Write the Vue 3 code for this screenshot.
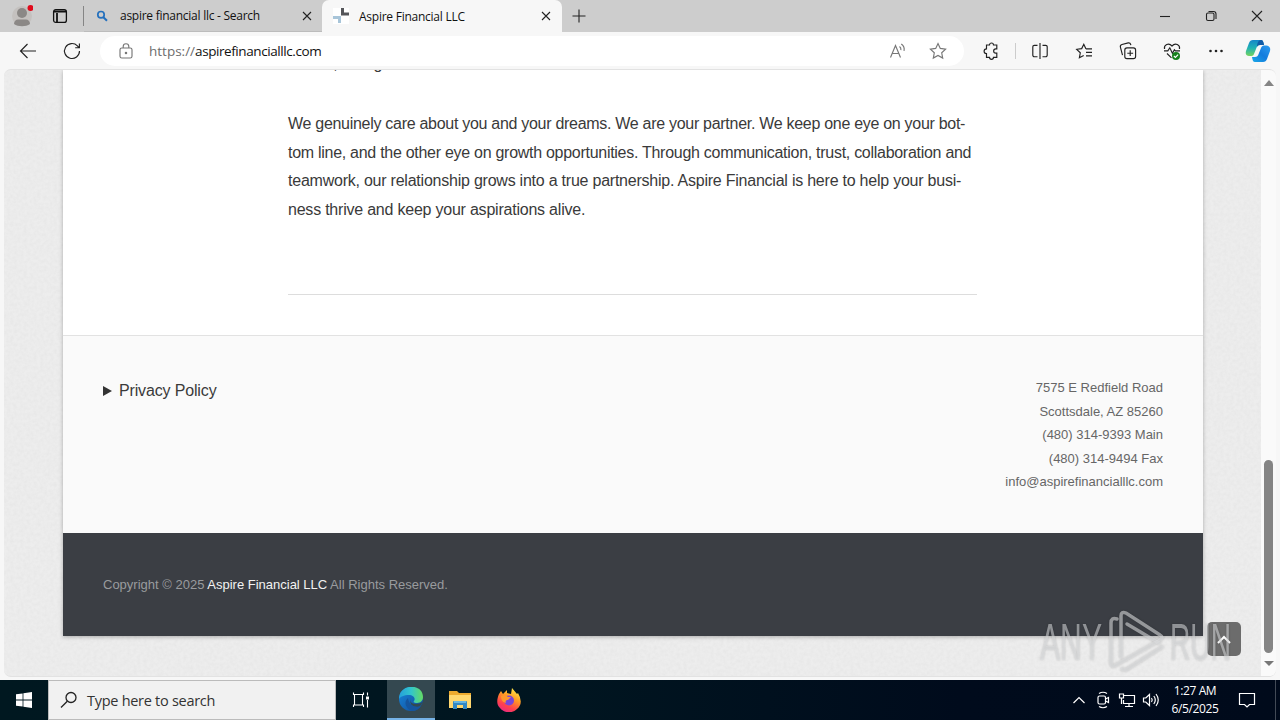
<template>
	<div class="desktop">
		<header class="tabs">
			<div class="tool profile">
				<svg width="22" height="24" viewBox="0 0 22 24">
					<circle cx="11" cy="12" r="10" fill="#c4c1bf" />
					<circle cx="11" cy="9" r="5" fill="#8b8886" />
					<path d="M3 20c0-3 2-4.500 4-4.500h8c2 0 4 1.500 4 4.500-4 3-12 3-16 0z" fill="#8b8886" />
					<circle cx="19.500" cy="4" r="3" fill="#e00b1c" />
				</svg>
			</div>
			<div class="tool workspace">
				<svg width="16" height="16" viewBox="0 0 16 16" fill="none" stroke="#111" stroke-width="1.300">
					<rect x="1.600" y="1.600" width="12.800" height="12.800" rx="2.200" />
					<path d="M2 3.500h12M5 5v9" stroke-width="1.800" />
				</svg>
			</div>
			<i class="tab-line"></i>
			<div class="tab">
				<svg class="favicon" width="14" height="14" viewBox="0 0 14 14" fill="none" stroke="#2470bd">
					<circle cx="6" cy="5.700" r="3.200" stroke-width="1.700" />
					<path d="M8.400 8.200l3.600 3.600" stroke-width="2" />
				</svg>
				<span class="title search-title">aspire financial llc - Search</span>
				<svg class="x" width="10" height="10" viewBox="0 0 10 10"><path d="M1 1l8 8M9 1l-8 8" /></svg>
			</div>
			<div class="tab active">
				<svg class="favicon" width="16" height="16" viewBox="0 0 16 16">
					<path d="M0 0h16v16H0z" fill="#fff" />
					<path d="M8 0h3v4.500h5v3H8z" fill="#55565a" />
					<path d="M0 8h8v7H5v-4H0z" fill="#a8c5d9" />
				</svg>
				<span class="title site-title">Aspire Financial LLC</span>
				<svg class="x" width="10" height="10" viewBox="0 0 10 10"><path d="M1 1l8 8M9 1l-8 8" /></svg>
			</div>
			<svg class="plus" width="14" height="14" viewBox="0 0 14 14"><path d="M7 .5v13M.5 7h13" /></svg>
			<div class="window-buttons">
				<svg width="12" height="12" viewBox="0 0 12 12"><path d="M1 6.500h10" /></svg>
				<svg width="12" height="12" viewBox="0 0 12 12">
					<rect x="1.500" y="3" width="7.500" height="7.500" rx="1.500" />
					<path d="M3.500 1.500h5a2.500 2.500 0 0 1 2.500 2.500v5" />
				</svg>
				<svg width="12" height="12" viewBox="0 0 12 12"><path d="M1 1l10 10M11 1L1 11" /></svg>
			</div>
		</header>

		<nav class="toolbar">
			<div class="nav-button">
				<svg width="18" height="16" viewBox="0 0 18 16"><path d="M17 8H1.500M8.500 1L1.500 8l7 7" /></svg>
			</div>
			<div class="nav-button">
				<svg width="18" height="18" viewBox="0 0 18 18">
					<path d="M16.500 9A7.500 7.500 0 1 1 14.400 3.800L16 5.500M16.400 1.500v4.200h-4.200" />
				</svg>
			</div>
			<div class="address">
				<svg class="lock" width="14" height="16" viewBox="0 0 14 16">
					<rect x="1" y="5" width="12" height="10" rx="1.800" />
					<path d="M4.200 5V3.500a2.800 2.800 0 0 1 5.600 0V5" />
					<circle cx="7" cy="10" r=".7" />
				</svg>
				<span class="url"><span>https://</span>aspirefinancialllc.com</span>
				<svg class="read" width="18" height="16" viewBox="0 0 18 16">
					<path d="M1.500 14.500L6.500 2.500l5 12M3.200 10.500h6.600M10.500 3.500c1.300 1 1.600 2.200 1.400 3.700M12.300 1c2.600 1.900 3.300 4.300 2.700 6.800" />
				</svg>
				<svg width="18" height="18" viewBox="0 0 18 18">
					<path d="M9 1.500l2.300 4.900 5.300.7-3.900 3.700 1 5.300L9 13.500l-4.700 2.600 1-5.300L1.400 7.100l5.300-.7z" />
				</svg>
			</div>
			<div class="actions">
				<div class="action puzzle">
					<svg width="18" height="18" viewBox="0 0 18 18">
						<path d="M4.500 3h3a2 2 0 0 1 4 0h3.300v3.800h-1a2.100 2.100 0 0 0 0 4.300h1v4.200h-3.300a2 2 0 0 1-4 0h-3v-3.700a2.400 2.400 0 0 1 0-4.800z" />
					</svg>
				</div>
				<i class="divider"></i>
				<div class="action">
					<svg width="18" height="18" viewBox="0 0 18 18">
						<path d="M9 1v16M6.500 3.300H3.300a1.500 1.500 0 0 0-1.500 1.500v8.400a1.500 1.500 0 0 0 1.500 1.500h3.200M11.500 3.300h3.200a1.500 1.500 0 0 1 1.500 1.500v8.400a1.500 1.500 0 0 1-1.500 1.500h-3.200" />
					</svg>
				</div>
				<div class="action">
					<svg width="18" height="18" viewBox="0 0 18 18">
						<path d="M11 7L8.800 2.300 6.700 6.600l-5 .7 3.600 3.500-.9 4.900 4.300-2.300M11 6.800h6M11 10.300h6M11 13.800h6" />
					</svg>
				</div>
				<div class="action">
					<svg width="18" height="18" viewBox="0 0 18 18">
						<rect x="5.800" y="5.800" width="10.800" height="10.800" rx="2.200" />
						<path d="M11.200 8.300v5.800M8.300 11.200h5.800M3.500 13.200L1.400 5.200C1 3.700 1.700 2.900 3 2.500l6.200-1.600c1.400-.3 2.300.4 2.700 2.300" />
					</svg>
				</div>
				<div class="action">
					<svg width="18" height="18" viewBox="0 0 18 18">
						<path d="M1.500 7C.7 3 5.600.2 9 4c3.400-3.800 8.300-1 7.500 3M1 8.800h3.800l2-3 2.600 5.500 2-3.500 1 1H17M4 11.500l4.500 4.300" />
						<circle cx="13" cy="14" r="4" fill="#16801b" stroke="none" />
						<path d="M10.900 14l1.500 1.400 2.700-2.800" stroke="#fff" />
					</svg>
				</div>
				<div class="action">
					<svg width="18" height="18" viewBox="0 0 18 18">
						<g fill="#222" stroke="none"><circle cx="3.500" cy="9" r="1.300" /><circle cx="9" cy="9" r="1.300" /><circle cx="14.500" cy="9" r="1.300" /></g>
					</svg>
				</div>
				<svg class="copilot" width="26" height="24" viewBox="0 0 26 24">
					<defs>
						<linearGradient id="copilotLeft" x1="0" y1="0" x2="0" y2="1"><stop offset="0" stop-color="#1686c9" /><stop offset=".5" stop-color="#20b2b4" /><stop offset="1" stop-color="#75d45e" /></linearGradient>
						<linearGradient id="copilotRight" x1="0" y1="1" x2="1" y2="0"><stop offset="0" stop-color="#1aa9e8" /><stop offset=".5" stop-color="#147cdd" /><stop offset="1" stop-color="#2d9df0" /></linearGradient>
					</defs>
					<path d="M8 1h8c2 0 2.500 2 3 5h-4c-2 0-3 1-3.600 3L9 15c-.7 2-2 2-4 2-3 0-5-1-4-5L4 4c.7-2 2-3 4-3z" fill="url(#copilotLeft)" />
					<path d="M16 1c2 0 2.500 2 3 5h-4c-1.700 0-2.500.7-3 2 0-3 1-7 4-7z" fill="#115ba7" />
					<path d="M18 23h-8c-2 0-2.500-2-3-5h3c2 0 3-1 3.600-3L16 9c.7-2 2-2.500 4-2.500 4 0 6 2 5 5.500l-3 8c-.7 2-2 3-4 3z" fill="url(#copilotRight)" />
				</svg>
			</div>
		</nav>

		<main class="viewport">
			<svg class="paper" width="1257" height="608">
				<filter id="grain"><feTurbulence type="fractalNoise" baseFrequency=".3" numOctaves="3" seed="4" /><feColorMatrix values="0 0 0 0 .5  0 0 0 0 .5  0 0 0 0 .5  .2 0 0 0 -.06" /></filter>
				<rect width="1257" height="608" filter="url(#grain)" />
			</svg>
			<div class="page">
				<article>
					<p class="previous">clients, and guide</p>
					<p>
						<span v-for="line in paragraph" :key="line.text" :style="{ letterSpacing: line.spacing + 'px' }">{{ line.text }}</span>
					</p>
					<hr />
				</article>
				<section class="contact">
					<div class="privacy"><i></i>Privacy Policy</div>
					<address>
						<span v-for="line in address" :key="line">{{ line }}</span>
					</address>
				</section>
				<footer>Copyright © 2025 <b>Aspire Financial LLC</b> All Rights Reserved.</footer>
			</div>
			<div class="scrollbar">
				<i class="up"></i>
				<i class="thumb"></i>
				<i class="down"></i>
			</div>
			<button class="to-top">
				<svg width="14" height="9" viewBox="0 0 14 9"><path d="M1 8l6-6 6 6" fill="none" stroke="#fff" stroke-width="2" /></svg>
			</button>
			<svg class="watermark" width="200" height="70" viewBox="0 0 200 70">
				<g class="letters">
					<text x="4" y="54" textLength="62" lengthAdjust="spacingAndGlyphs">ANY</text>
					<text x="134" y="54" textLength="61" lengthAdjust="spacingAndGlyphs">RUN</text>
				</g>
				<g class="play">
					<path d="M81 13q-6-2-6 4v40q0 5 5 2l44-25q4-3 0-5L90 7q-5-2-5 3v41" />
					<path d="M91 18l32 19M86 63q3 2 7-1l33-21" />
				</g>
			</svg>
		</main>

		<div class="taskbar">
			<div class="start">
				<svg width="16" height="16" viewBox="0 0 16 16" fill="#fff"><path d="M0 2.300l6.600-.9v6.200H0zM7.400 1.300L16 0v7.600H7.400zM0 8.400h6.600v6.200L0 13.700zM7.400 8.400H16V16l-8.600-1.300z" /></svg>
			</div>
			<div class="search">
				<svg width="18" height="18" viewBox="0 0 18 18" fill="none" stroke="#222" stroke-width="1.300"><circle cx="11" cy="6.500" r="5" /><path d="M7.300 10.200L1 16.500" /></svg>
				<span>Type here to search</span>
			</div>
			<div class="task">
				<svg width="18" height="18" viewBox="0 0 18 18" fill="none" stroke="#fff" stroke-width="1.100">
					<path d="M1.500 1.500v2h10v-2M1.500 16v-2h10v2M2.500 3.500v10.500M10.500 3.500v10.500M15.500 1.500v3M15.500 9v7.500" /><path d="M14 5.500h3v3h-3z" fill="#fff" stroke="none" />
				</svg>
			</div>
			<div class="task running">
				<svg width="24" height="24" viewBox="0 0 24 24">
					<defs>
						<linearGradient id="edgeTop"><stop offset="0" stop-color="#249fdb" /><stop offset=".5" stop-color="#32c5cc" /><stop offset="1" stop-color="#65db62" /></linearGradient>
						<linearGradient id="edgeBody" x1="0" y1="0" x2="1" y2="1"><stop offset="0" stop-color="#1787dd" /><stop offset="1" stop-color="#114a96" /></linearGradient>
					</defs>
					<circle cx="12" cy="12" r="12" fill="url(#edgeBody)" />
					<path d="M0 12C0-4 24-4 24 10c0 5-4 6-7 6-2 0-3-1-2-2 2-3-1-6-5-6-5 0-9 2-10 4z" fill="url(#edgeTop)" />
					<path d="M12 10c-2 4 0 7 5 7 3 0 5-1 6.500-2-1 3-3 5-6 5-5 0-8-5-5.500-10z" fill="#334950" />
					<path d="M9 11c-5 4-2 11 4 13 4 0 7-2 9-5-5 2-12 0-13-8z" fill="#15559e" />
				</svg>
			</div>
			<div class="task">
				<svg width="22" height="20" viewBox="0 0 22 20">
					<path d="M0 1h8l2 2h12v15H0z" fill="#edaa2f" /><path d="M0 5h22v13H0z" fill="#ffd76f" />
					<path d="M4 19v-7q0-1 1-1h12q1 0 1 1v7h-4v-4H8v4z" fill="#3288c5" /><path d="M5 11h12v2H5z" fill="#66b5e2" />
				</svg>
			</div>
			<div class="task">
				<svg width="24" height="24" viewBox="0 0 24 24">
					<defs><linearGradient id="fire" x1=".8" y1="0" x2=".3" y2="1"><stop offset="0" stop-color="#fff34d" /><stop offset=".4" stop-color="#ff9b23" /><stop offset=".75" stop-color="#ff404d" /><stop offset="1" stop-color="#e92a82" /></linearGradient></defs>
					<path d="M2 6l2-3 2 3 4-4v3l4 1 1-6 5 6 1-1q6 10-1 16c-5 5-13 4-17-1-4-4-3-9-1-14z" fill="url(#fire)" />
					<circle cx="12" cy="12.500" r="5" fill="#7846d8" /><path d="M4 8c3-2 5-1 7 1h3l-3 3c-2 0-3 1-2 3-4-1-5-4-5-7z" fill="#ff982b" />
				</svg>
			</div>
			<div class="tray">
				<svg width="24" height="20" viewBox="0 0 24 20"><path d="M6.500 13l5.500-5.500L17.500 13" /></svg>
				<svg width="24" height="20" viewBox="0 0 24 20"><rect x="7" y="6" width="7.500" height="8" rx="1.500" /><path d="M14.500 9l3-1.500v5l-3-1.500M8 3.500q4-2.500 8 0M8 16.500q4 2.500 8 0" /></svg>
				<svg width="24" height="20" viewBox="0 0 24 20"><path d="M9 5.500h10.500v8H8.500V10M14 13.500v3M10 16.500h8M4.500 4h4v4h-4zM6.500 8v6" /></svg>
				<svg width="24" height="20" viewBox="0 0 24 20"><path d="M4.500 8h2.300L10.500 4.500v11L6.800 12H4.500zM12.500 8q1.500 2 0 4M14.800 6q3 4 0 8M17 4q4.500 6 0 12" /></svg>
				<div class="clock"><span>1:27 AM</span><span>6/5/2025</span></div>
				<svg class="notice" width="20" height="20" viewBox="0 0 20 20"><path d="M2.500 3.500h15v11h-5L10 17l-2.500-2.500h-5z" /></svg>
			</div>
		</div>
	</div>
</template>

<script setup>
const paragraph = [
	{ text: 'We genuinely care about you and your dreams. We are your partner. We keep one eye on your bot-', spacing: -0.29 },
	{ text: 'tom line, and the other eye on growth opportunities. Through communication, trust, collaboration and', spacing: -0.28 },
	{ text: 'teamwork, our relationship grows into a true partnership. Aspire Financial is here to help your busi-', spacing: -0.23 },
	{ text: 'ness thrive and keep your aspirations alive.', spacing: -0.22 }
]

const address = [
	'7575 E Redfield Road',
	'Scottsdale, AZ 85260',
	'(480) 314-9393 Main',
	'(480) 314-9494 Fax',
	'info@aspirefinancialllc.com'
]
</script>

<style>
body {
	margin: 0;
	overflow: hidden;
}
</style>

<style scoped>
* {
	box-sizing: border-box;
}

.desktop {
	width: 1280px;
	height: 720px;
	display: flex;
	flex-direction: column;
	background: #f7f7f7;
	color: #111;
	font-family: "Open Sans", "Noto Sans", sans-serif;
	overflow: hidden;
}

svg {
	flex-shrink: 0;
	display: block;
}

/* tab strip */
.tabs {
	height: 32px;
	background: #cdcdcd;
	display: flex;
	align-items: center;
	flex-shrink: 0;
}

.tool {
	display: flex;
	justify-content: center;
}

.profile {
	width: 44px;
}

.workspace {
	width: 32px;
}

.tab-line {
	width: 1px;
	height: 20px;
	margin-left: 7px;
	background: #858585;
}

.tab {
	width: 238px;
	height: 32px;
	display: flex;
	align-items: center;
	padding: 0 10px 0 11px;
	border-bottom: 1px solid #bcbcbc;
}

.tab.active {
	width: 240px;
	padding: 0 11px;
	background: #f7f7f7;
	border: 0;
	border-radius: 7px 7px 0 0;
}

.title {
	font-size: 12px;
	margin-left: 11px;
	white-space: nowrap;
	flex: 1;
}

.active .title {
	margin-left: 10px;
}

.search-title {
	letter-spacing: -.26px;
}

.site-title {
	letter-spacing: -.25px;
}

.x,
.plus,
.window-buttons svg {
	fill: none;
	stroke: #222;
	stroke-width: 1.1;
}

.plus {
	margin-left: 10px;
}

.window-buttons {
	margin-left: auto;
	display: flex;
	gap: 34px;
	padding-right: 17px;
}

/* navigation */
.toolbar {
	height: 37px;
	padding-left: 6px;
	display: flex;
	align-items: center;
	flex-shrink: 0;
}

.nav-button {
	width: 44px;
	display: flex;
	justify-content: center;
}

.toolbar svg:not(.copilot) {
	fill: none;
	stroke: #222;
	stroke-width: 1.15;
}

.address {
	width: 864px;
	height: 30px;
	margin-left: 6px;
	padding: 0 17px 0 19px;
	border-radius: 15px;
	background: #fff;
	display: flex;
	align-items: center;
}

.toolbar .address svg:not(.copilot) {
	stroke: #777;
}

.url {
	flex: 1;
	margin-left: 16px;
	font-size: 13.5px;
	letter-spacing: -.42px;
}

.url span {
	color: #6d6d6d;
	letter-spacing: 0;
}

.read {
	margin-right: 22px;
}

.actions {
	display: flex;
	align-items: center;
}

.action {
	width: 44px;
	display: flex;
	justify-content: center;
}

.puzzle {
	width: 54px;
	margin-right: -3px;
}

.divider {
	width: 1px;
	height: 16px;
	background: #ccc;
	margin-right: 2px;
}

.copilot {
	margin-left: 7px;
}

/* web page */
.viewport {
	position: relative;
	height: 608px;
	margin: 0 4px 3px;
	border-radius: 7px;
	background: #ededed;
	border: 1px solid #e2e2e2;
	border-width: 1px 0;
	overflow: hidden;
	display: flex;
	justify-content: space-between;
	flex-shrink: 0;
	font-family: "Liberation Sans", Arial, sans-serif;
}

.paper {
	position: absolute;
	left: 0;
	top: 0;
}

.page {
	position: relative;
	width: 1140px;
	height: 566px;
	margin-left: 59px;
	background: #fff;
	box-shadow: 0 1px 4px rgba(0, 0, 0, .28);
}

article {
	display: flow-root;
	height: 265px;
	padding: 0 226px 0 225px;
	color: #3a3a3a;
	font-size: 16px;
	line-height: 28.6px;
	white-space: nowrap;
}

article p {
	margin: 0;
}

article p span {
	display: block;
}

/* only the descenders of this line are scrolled into view */
article .previous {
	margin: -20px 0 31.4px;
}

article hr {
	margin: 69.6px 0 0;
	border: 0;
	border-top: 1px solid #ddd;
}

.contact {
	height: 198px;
	padding: 40px;
	background: #fafafa;
	border-top: 1px solid #e2e2e2;
	display: flex;
	justify-content: space-between;
	color: #3a3a3a;
}

.privacy {
	height: 29px;
	display: flex;
	align-items: center;
	font-size: 16px;
	letter-spacing: -.15px;
}

.privacy i {
	border-left: 9px solid #333;
	border-top: 5px solid transparent;
	border-bottom: 5px solid transparent;
	margin-right: 7px;
}

address {
	font-style: normal;
	font-size: 13px;
	line-height: 23.5px;
	text-align: right;
	color: #666;
}

address span {
	display: block;
}

footer {
	height: 103px;
	padding: 40px;
	background: #3b3e44;
	color: #999b9e;
	font-size: 13px;
	line-height: 23px;
}

footer b {
	font-weight: 400;
	color: #f2f2f2;
}

.scrollbar {
	position: relative;
	width: 15px;
	background: #fafafa;
	display: flex;
	flex-direction: column;
	align-items: center;
	padding-top: 10px;
}

.up,
.down {
	border-left: 5px solid transparent;
	border-right: 5px solid transparent;
}

.up {
	border-bottom: 6px solid #858585;
}

.thumb {
	width: 9px;
	height: 193px;
	margin: 374px 0 8px;
	border-radius: 5px;
	background: #858585;
}

.down {
	border-top: 5px solid #777;
}

.to-top {
	position: absolute;
	right: 35px;
	bottom: 20px;
	width: 34px;
	height: 34px;
	padding: 0;
	border: 0;
	border-radius: 5px;
	background: #6c6c6c;
	display: flex;
	align-items: center;
	justify-content: center;
}

.watermark {
	position: absolute;
	left: 1032px;
	top: 536px;
	filter: drop-shadow(0 0 1px rgba(0, 0, 0, .3));
}

.letters {
	fill: rgba(220, 222, 224, .55);
	font: 52px "Liberation Sans", Arial, sans-serif;
}

.play {
	fill: none;
	stroke: rgba(220, 222, 224, .58);
	stroke-width: 3.5;
	stroke-linecap: round;
}

/* windows taskbar */
.taskbar {
	height: 40px;
	display: flex;
	align-items: center;
	background: linear-gradient(90deg, #001820, #001520 45%, #000b1c 75%, #000a1b);
	flex-shrink: 0;
}

.start,
.task {
	width: 48px;
	height: 40px;
	display: flex;
	align-items: center;
	justify-content: center;
}

.search {
	width: 288px;
	height: 40px;
	padding-left: 11px;
	display: flex;
	align-items: center;
	background: #f1f1f1;
	border: 1px solid #bbb;
	color: #333;
	font-size: 14.5px;
	letter-spacing: -.28px;
}

.search span {
	margin-left: 9px;
}

.search + .task {
	width: 51px;
	padding-right: 2px;
}

.running {
	background: #344850;
	border-bottom: 2px solid #76b3e7;
}

.running + .task {
	width: 50px;
}

.tray {
	margin-left: auto;
	margin-right: 4px;
	height: 40px;
	display: flex;
	align-items: center;
	border-right: 1px solid #424a56;
}

.tray svg {
	fill: none;
	stroke: #fff;
	stroke-width: 1.2;
}

.clock {
	width: 64px;
	color: #fff;
	font-size: 12px;
	line-height: 18px;
	letter-spacing: -.4px;
	display: flex;
	flex-direction: column;
	align-items: center;
}

.notice {
	margin: 0 18px 0 10px;
}
</style>
